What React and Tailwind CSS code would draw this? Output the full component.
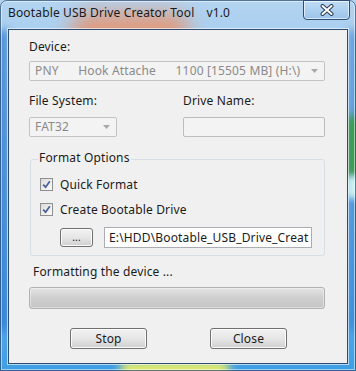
import React from 'react';

const font = { fontFamily: '"Noto Sans", "Open Sans", sans-serif' };

function ComboBox({ className, children }) {
  return (
    <div className={`flex items-center h-[20px] rounded-[2px] border border-[#c3c3c3] bg-[#f3f3f3] text-[#8a8a8a] pl-[5px] pr-[6px] ${className}`}>
      <div className="flex-1 whitespace-pre leading-none">{children}</div>
      <svg width="7" height="4" viewBox="0 0 7 4"><path d="M0 0h7L3.5 4z" fill="#a8a8a8" /></svg>
    </div>
  );
}

function CheckBox({ label, className }) {
  return (
    <div className={`flex items-center ${className}`}>
      <div className="w-[13px] h-[13px] border border-[#8e8f8f] bg-gradient-to-br from-[#dcdcdc] to-[#fbfbfb] flex items-center justify-center">
        <svg width="9" height="9" viewBox="0 0 9 9">
          <path d="M1.2 4.6 L3.6 7.2 L7.8 1.2" fill="none" stroke="#4b5f94" strokeWidth="1.7" />
        </svg>
      </div>
      <span className="ml-[7px] leading-none text-[#1b1b1b]">{label}</span>
    </div>
  );
}

function Button({ className, children }) {
  return (
    <div className={`flex items-center justify-center rounded-[3px] border border-[#707070] bg-gradient-to-b from-[#f2f2f2] via-[#e6e6e6] to-[#d0d0d0] shadow-[inset_0_0_0_1px_#fbfbfb] text-[#1b1b1b] leading-none ${className}`}>
      {children}
    </div>
  );
}

export default function App() {
  return (
    <div className="relative w-[356px] h-[371px] overflow-hidden bg-[#8fc0ea] text-[12px] tracking-[0.15px]" style={font}>
      {/* glass colour blobs behind the frame */}
      <div className="absolute inset-0 bg-gradient-to-b from-[#b3d4f1] via-[#7fb6e6] to-[#3f9fe4]"></div>
      <div className="absolute left-[70px] top-[12px] w-[120px] h-[40px] rounded-full bg-[#f08a5a]/75 blur-[10px]"></div>
      <div className="absolute left-[-6px] top-[30px] w-[15px] h-[300px] bg-[#2a78cc]/70 blur-[4px]"></div>
      <div className="absolute right-[-6px] top-[30px] w-[15px] h-[300px] bg-[#2a78cc]/50 blur-[4px]"></div>
      <div className="absolute right-[-6px] top-[115px] w-[16px] h-[65px] rounded-full bg-[#3c9a4a] blur-[4px]"></div>
      <div className="absolute right-[-4px] top-[175px] w-[14px] h-[24px] rounded-full bg-[#c8f2f2] blur-[3px]"></div>
      <div className="absolute left-[120px] bottom-[-6px] w-[110px] h-[16px] rounded-full bg-[#e6ec6a] blur-[5px]"></div>

      <div className="relative h-full rounded-t-[7px] border border-[#2b4b73]/70 shadow-[inset_0_0_0_1px_rgba(255,255,255,0.5)] flex flex-col">
        {/* title bar */}
        <div className="flex h-[28px] items-start">
          <div className="pl-[7px] pt-[6px] text-[#1a1a1a] whitespace-pre leading-none">
            Bootable USB Drive Creator Tool<span className="ml-[12px]">v1.0</span>
          </div>
          <div className="ml-auto mr-[5px] mt-[-1px] w-[47px] h-[20px] rounded-b-[4px] border border-[#2e4d75] bg-gradient-to-b from-[#c8e1f6]/60 to-[#8dbbe6]/60 shadow-[inset_0_0_0_1px_rgba(255,255,255,0.6)] flex items-center justify-center">
            <svg width="14" height="12" viewBox="0 0 14 12">
              <path d="M2.5 2 L11.5 10 M11.5 2 L2.5 10" stroke="#2a3b55" strokeWidth="4" strokeLinecap="round" />
              <path d="M2.5 2 L11.5 10 M11.5 2 L2.5 10" stroke="#ffffff" strokeWidth="2" strokeLinecap="round" />
            </svg>
          </div>
        </div>

        {/* client area */}
        <div className="mx-[7px] h-[335px] border border-[#2e4c70] bg-[#f0f0f0] shadow-[0_0_0_1px_rgba(255,255,255,0.6)] pl-[20px] pr-[22px] flex flex-col text-[#1b1b1b]">
          <div className="mt-[11px] leading-none">Device:</div>
          <ComboBox className="mt-[8px]">
            {'PNY      Hook Attache      1100 [15505 MB] (H:\\)'}
          </ComboBox>

          <div className="mt-[14px] flex leading-none">
            <div className="w-[154px]">File System:</div>
            <div>Drive Name:</div>
          </div>
          <div className="mt-[10px] flex">
            <ComboBox className="w-[88px]">FAT32</ComboBox>
            <div className="ml-[66px] flex-1 h-[20px] rounded-[2px] border border-[#bdbdbd] bg-[#f3f3f3]"></div>
          </div>

          {/* format options group */}
          <div className="relative mt-[22px] ml-[1px] h-[97px] rounded-[3px] border border-[#d5dfe5] pl-[9px] pr-[12px]">
            <div className="absolute left-[7px] top-[-8px] bg-[#f0f0f0] px-[1px] leading-none">Format Options</div>
            <CheckBox className="mt-[18px]" label="Quick Format" />
            <CheckBox className="mt-[12px]" label="Create Bootable Drive" />
            <div className="mt-[11px] flex items-center">
              <Button className="ml-[20px] w-[33px] h-[19px] text-[10px] pb-[2px]">...</Button>
              <div className="ml-[11px] flex-1 h-[21px] border border-[#abadb3] bg-white pl-[4px] flex items-center whitespace-nowrap overflow-hidden leading-none">
                E:\HDD\Bootable_USB_Drive_Creat
              </div>
            </div>
          </div>

          <div className="mt-[10px] pl-[4px] leading-none">Formatting the device ...</div>
          <div className="mt-[9px] h-[22px] rounded-[3px] border border-[#b2b2b2] bg-gradient-to-b from-[#e3e3e3] via-[#cfcfcf] to-[#c6c6c6] shadow-[inset_0_0_0_1px_rgba(255,255,255,0.4)]"></div>

          <div className="mt-[19px] flex">
            <Button className="ml-[41px] w-[77px] h-[21px]">Stop</Button>
            <Button className="ml-[63px] w-[77px] h-[21px]">Close</Button>
          </div>
        </div>
      </div>
    </div>
  );
}
